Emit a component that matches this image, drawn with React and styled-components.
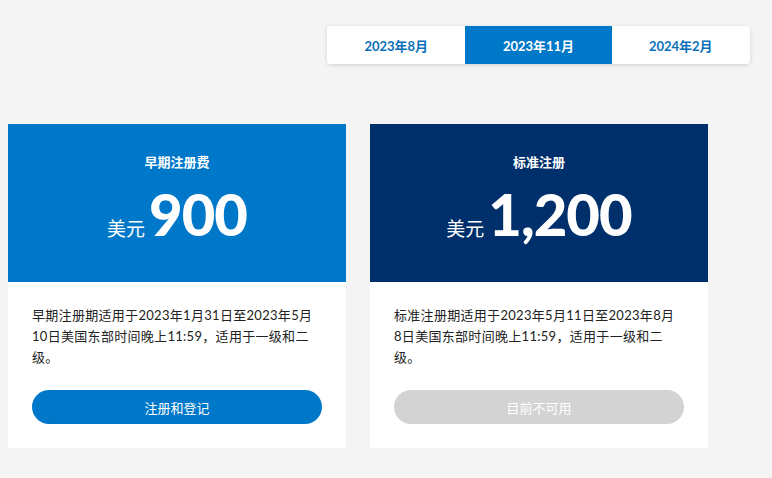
import React, { useState } from "react";
import styled, { createGlobalStyle } from "styled-components";

const GlobalStyle = createGlobalStyle`
  body {
    margin: 0;
    background: #f4f4f4;
    font-family: Lato, "Noto Sans CJK SC", sans-serif;
  }
`;

const Page = styled.div`
  padding: 26px 22px 0 8px;
`;

const TabBar = styled.div`
  display: flex;
  justify-content: flex-end;
`;

const Tabs = styled.div`
  display: flex;
  width: 423px;
  height: 38px;
  background: #fff;
  border-radius: 4px;
  box-shadow: 0 1px 4px rgba(0, 0, 0, 0.15);
  overflow: hidden;
`;

const Tab = styled.button`
  flex: 1 1 auto;
  border: none;
  margin: 0;
  padding: 0;
  font-family: inherit;
  font-size: 13px;
  font-weight: 700;
  cursor: pointer;
  background: ${(p) => (p.active ? "#0078c9" : "#fff")};
  color: ${(p) => (p.active ? "#fff" : "#0a6fb9")};
`;

const Cards = styled.div`
  display: flex;
  gap: 24px;
  margin-top: 60px;
`;

const Card = styled.div`
  width: 338px;
  background: #fff;
`;

const CardHead = styled.div`
  height: 158px;
  background: ${(p) => (p.dark ? "#00306b" : "#0078c9")};
  color: #fff;
  display: flex;
  flex-direction: column;
  align-items: center;
  padding-top: 29px;
  box-sizing: border-box;
`;

const Title = styled.div`
  font-size: 13px;
  font-weight: 700;
  line-height: 18px;
`;

const Price = styled.div`
  display: flex;
  align-items: baseline;
  gap: 4px;
  margin-top: 10px;
`;

const Currency = styled.span`
  font-size: 19px;
`;

const Amount = styled.span`
  font-size: 58px;
  font-weight: 900;
  letter-spacing: -1px;
  line-height: 66px;
`;

const CardBody = styled.div`
  padding: 23px 24px 24px;
`;

const Text = styled.p`
  margin: 0;
  padding-right: 4px;
  font-size: 13px;
  line-height: 21px;
  letter-spacing: 0.3px;
  color: #222;
`;

const Action = styled.button`
  display: block;
  width: 100%;
  height: 34px;
  margin-top: 22px;
  border: none;
  border-radius: 17px;
  font-family: inherit;
  font-size: 13px;
  color: #fff;
  background: ${(p) => (p.disabled ? "#d3d3d3" : "#0078c9")};
  cursor: ${(p) => (p.disabled ? "default" : "pointer")};
`;

const periods = ["2023年8月", "2023年11月", "2024年2月"];

const plans = [
  {
    title: "早期注册费",
    amount: "900",
    text: "早期注册期适用于2023年1月31日至2023年5月10日美国东部时间晚上11:59，适用于一级和二级。",
    action: "注册和登记",
  },
  {
    title: "标准注册",
    amount: "1,200",
    dark: true,
    text: "标准注册期适用于2023年5月11日至2023年8月8日美国东部时间晚上11:59，适用于一级和二级。",
    action: "目前不可用",
    disabled: true,
  },
];

export default function App() {
  const [active, setActive] = useState(1);
  return (
    <>
      <GlobalStyle />
      <Page>
        <TabBar>
          <Tabs>
            {periods.map((p, i) => (
              <Tab key={p} active={i === active} onClick={() => setActive(i)}>
                {p}
              </Tab>
            ))}
          </Tabs>
        </TabBar>
        <Cards>
          {plans.map((plan) => (
            <Card key={plan.title}>
              <CardHead dark={plan.dark}>
                <Title>{plan.title}</Title>
                <Price>
                  <Currency>美元</Currency>
                  <Amount>{plan.amount}</Amount>
                </Price>
              </CardHead>
              <CardBody>
                <Text>{plan.text}</Text>
                <Action disabled={plan.disabled}>{plan.action}</Action>
              </CardBody>
            </Card>
          ))}
        </Cards>
      </Page>
    </>
  );
}
